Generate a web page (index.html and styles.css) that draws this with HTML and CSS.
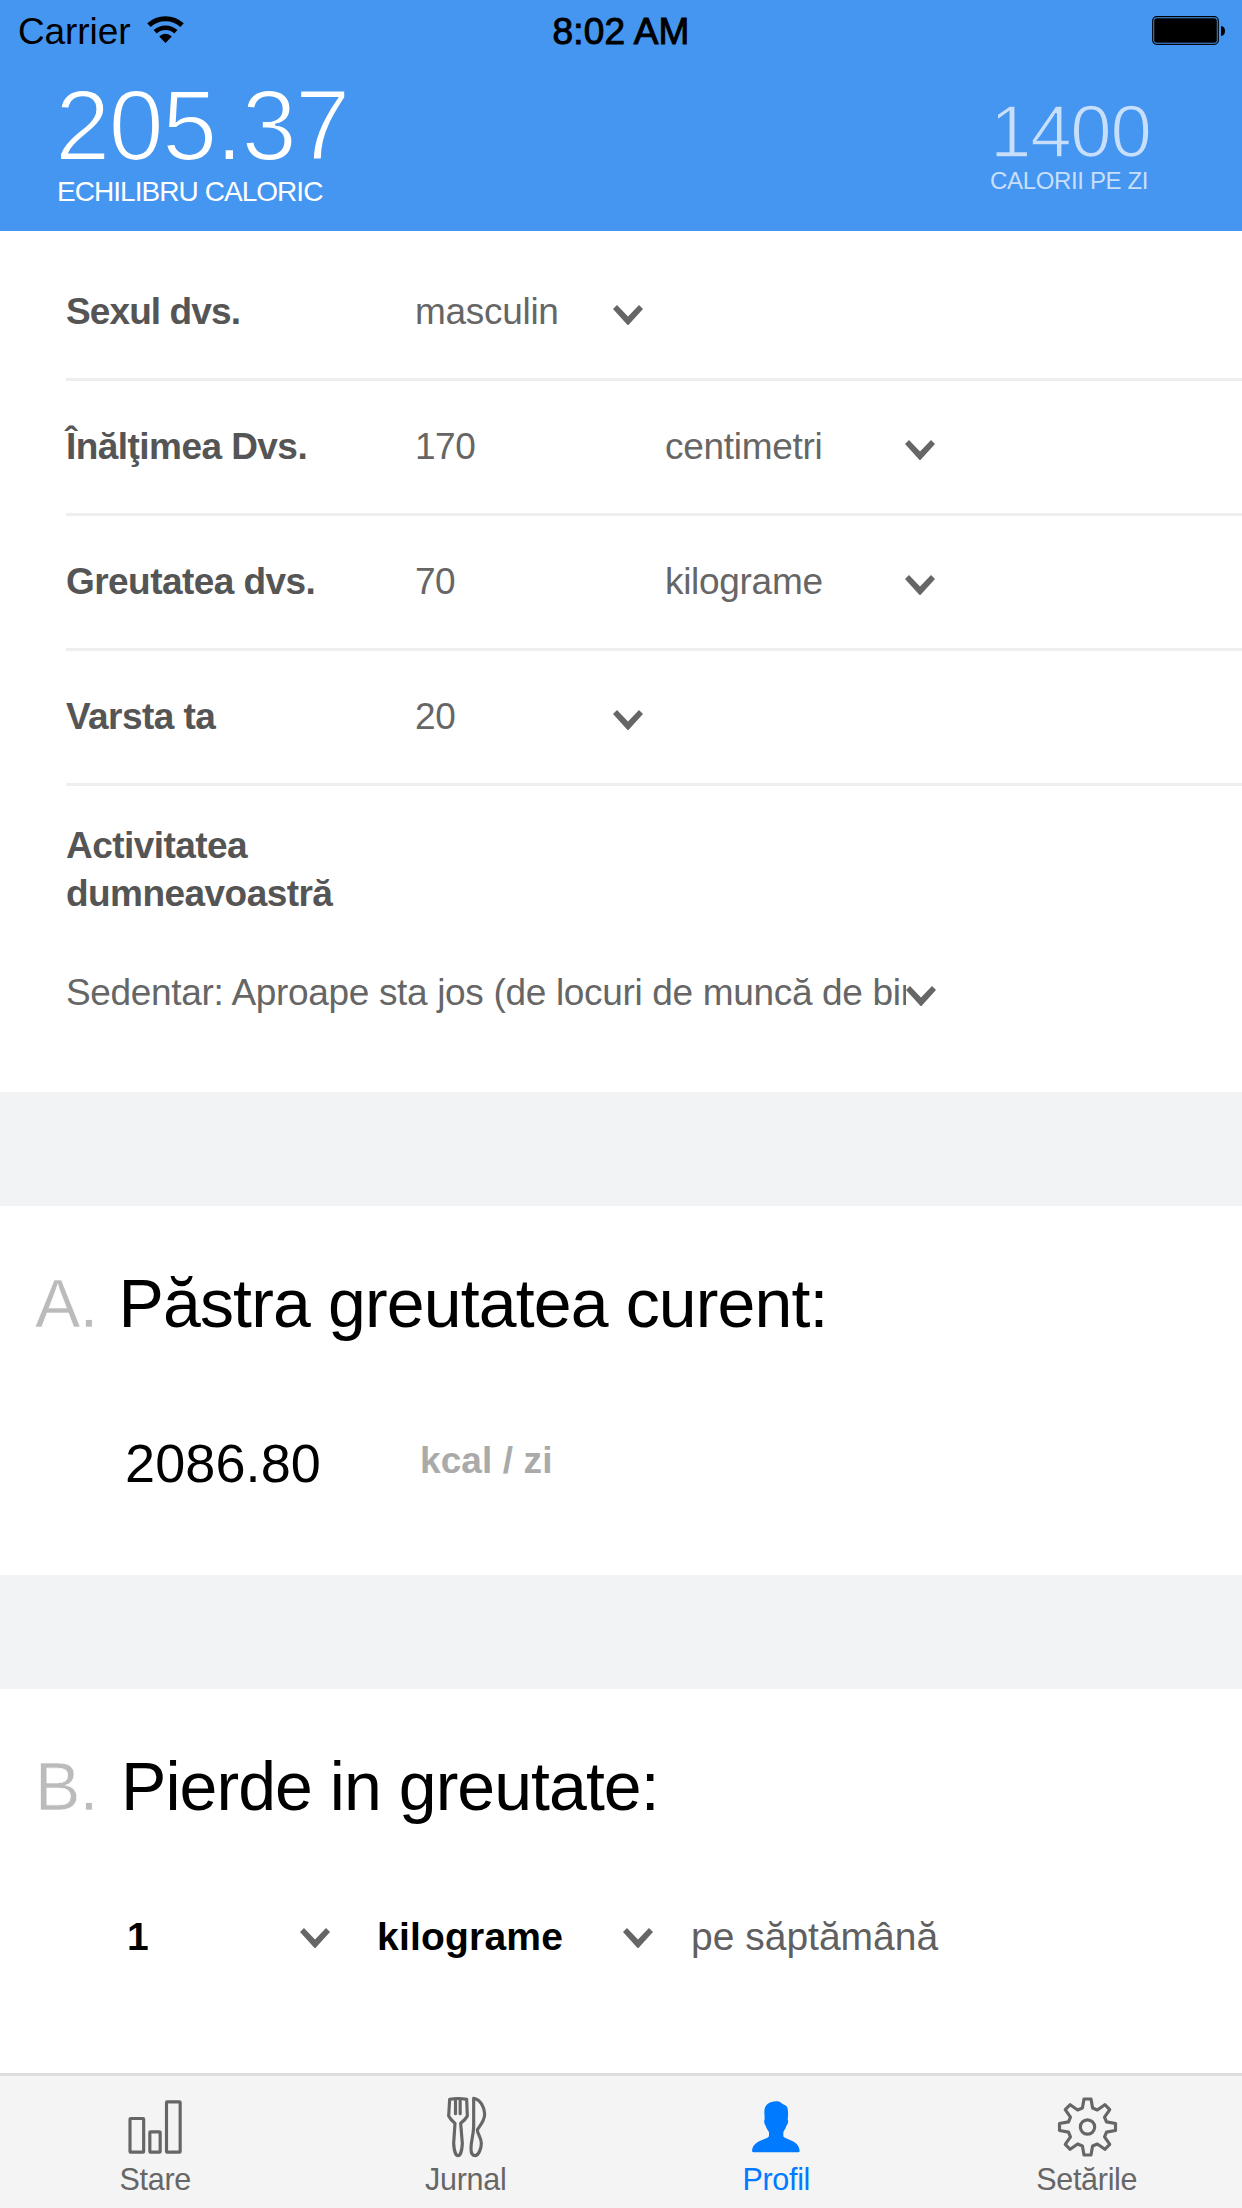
FILE: index.html
```html
<!DOCTYPE html>
<html lang="ro">
<head>
<meta charset="utf-8">
<title>Profil</title>
<link rel="stylesheet" href="styles.css">
</head>
<body>
<svg class="defs" aria-hidden="true">
  <symbol id="chevron" viewBox="0 0 30 20.5"><path d="M4 0 15 11.600 26 0 30 4 15 20.500 0 4Z"/></symbol>
</svg>
<div class="screen">
  <header class="header">
    <div class="status">
      <div class="status-left">
        <span>Carrier</span>
        <svg class="wifi" viewBox="0 0 37 28" fill="none" stroke="#000"><path stroke-width="5" d="M1.9 9.2A24.3 24.3 0 0 1 35.1 9.2"/><path stroke-width="4.6" d="M8.1 15.8A15.3 15.3 0 0 1 28.9 15.8"/><path fill="#000" stroke="none" d="M12.2 20.4A9 9 0 0 1 24.8 20.4L18.5 27Z"/></svg>
      </div>
      <span class="clock">8:02 AM</span>
      <div class="status-right">
        <svg class="battery" viewBox="0 0 74 30"><rect x=".7" y=".7" width="65.6" height="27.6" rx="4" fill="none" stroke="#000" stroke-width="1.2"/><rect x="2.200" y="2.200" width="62.600" height="24.600" rx="2.5"/><path d="M69 10Q73 10.500 73 15T69 20Z"/></svg>
      </div>
    </div>
    <div class="summary">
      <div class="balance">
        <div class="balance-value">205.37</div>
        <div class="balance-caption">ECHILIBRU CALORIC</div>
      </div>
      <div class="goal">
        <div class="goal-value">1400</div>
        <div class="goal-caption">CALORII PE ZI</div>
      </div>
    </div>
  </header>

  <main class="content">
    <section class="form">
      <div class="row first">
        <label class="label tight">Sexul dvs.</label>
        <div class="select single"><span>masculin</span><svg class="chevron"><use href="#chevron"/></svg></div>
      </div>
      <div class="row">
        <label class="label">Înălţimea Dvs.</label>
        <span class="value">170</span>
        <div class="select unit"><span>centimetri</span><svg class="chevron"><use href="#chevron"/></svg></div>
      </div>
      <div class="row">
        <label class="label">Greutatea dvs.</label>
        <span class="value">70</span>
        <div class="select unit"><span>kilograme</span><svg class="chevron"><use href="#chevron"/></svg></div>
      </div>
      <div class="row">
        <label class="label">Varsta ta</label>
        <div class="select single"><span>20</span><svg class="chevron"><use href="#chevron"/></svg></div>
      </div>
      <div class="activity">
        <label class="label">Activitatea dumneavoastră</label>
        <div class="activity-select"><span class="activity-text">Sedentar: Aproape sta jos (de locuri de muncă de birou)</span><svg class="chevron"><use href="#chevron"/></svg></div>
      </div>
    </section>

    <section class="plan plan-a">
      <h2 class="title"><span class="letter">A.</span><span>Păstra greutatea curent:</span></h2>
      <div class="result"><span class="kcal">2086.80</span><span class="kcal-unit">kcal / zi</span></div>
    </section>

    <section class="plan plan-b">
      <h2 class="title"><span class="letter">B.</span><span>Pierde in greutate:</span></h2>
      <div class="rate">
        <div class="select amount"><b>1</b><svg class="chevron"><use href="#chevron"/></svg></div>
        <div class="select mass"><b>kilograme</b><svg class="chevron"><use href="#chevron"/></svg></div>
        <span class="period">pe săptămână</span>
      </div>
    </section>
  </main>

  <nav class="tabs">
    <a class="tab">
      <svg class="icon" viewBox="133 108 186 186"><g class="line"><rect x="151" y="175.500" width="41" height="101" rx="2"/><rect x="210.500" y="215.500" width="31" height="61" rx="2"/><rect x="260.500" y="125.500" width="41" height="151" rx="2"/></g></svg>
      <span>Stare</span>
    </a>
    <a class="tab">
      <svg class="icon" viewBox="134 108 186 186"><g class="line"><path d="M178 118Q203 113 229 118L231 168Q226 178 211 190L216 250C215 270 210 287 203 287S191 270 190 250L194 190Q180 178 175 168Z"/><path d="M195.500 117V161M209.500 117V161"/><path d="M250 115V200C249 230 242 240 242 266C242 282 247 287 255 287C265 285 273 266 273 250C273 232 261 222 261 209C270 196 283 182 283 162C283 142 270 118 250 115Z"/></g></svg>
      <span>Jurnal</span>
    </a>
    <a class="tab active">
      <svg class="icon" viewBox="136 108 186 186"><path fill="currentColor" d="M229 124C210 124 194 134 194 155L195 178C192 182 194 194 198 197C200 205 206 212 208 217L208 229C203 240 160 240 157 272Q157 277 163 277H295Q300 277 300 272C297 240 257 240 251 229V217C253 211 259 204 260 197C265 194 267 182 264 178C266 165 266 150 262 140C257 135 250 134 245 129C240 125 235 124 229 124Z"/></svg>
      <span>Profil</span>
    </a>
    <a class="tab">
      <svg class="icon" viewBox="-94.500 -93 186 186"><g class="line"><path d="M-15.300-57-10.500-84H10.500L15.300-57 29.500-51.100 52-66.800 66.800-52 51.100-29.500 57-15.300 84-10.500V10.500L57 15.300 51.100 29.500 66.800 52 52 66.800 29.500 51.100 15.300 57 10.500 84H-10.500L-15.300 57-29.500 51.100-52 66.800-66.800 52-51.100 29.500-57 15.300-84 10.500V-10.500L-57-15.300-51.100-29.500-66.800-52-52-66.800-29.500-51.100Z"/><circle r="21.500"/></g></svg>
      <span>Setările</span>
    </a>
  </nav>
</div>
</body>
</html>
```
FILE: styles.css
```css
* { box-sizing: border-box; }
body {
  margin: 0;
  background: #fff;
  font-family: "Liberation Sans", Arial, sans-serif;
  font-size: 37px;
  color: #666;
}
.defs { display: none; }
.screen {
  display: flex;
  flex-direction: column;
  width: 1242px;
  height: 2208px;
  overflow: hidden;
}

/* header */
.header { flex: none; height: 231px; background: #4596f1; color: #fff; }
.status {
  display: grid;
  grid-template-columns: 1fr auto 1fr;
  height: 62px;
  line-height: 64px;
  color: #000;
}
.status-left { display: flex; padding-left: 18px; letter-spacing: -.1px; }
.wifi { width: 37px; height: 28px; margin: 16px 0 0 17px; }
.clock { -webkit-text-stroke: 1px #000; letter-spacing: .2px; }
.status-right { display: flex; justify-content: flex-end; padding: 16px 16px 0 0; }
.battery { width: 74px; height: 30px; }
.summary { display: flex; justify-content: space-between; padding: 14px 0 0 55px; }
.balance-value {
  font-size: 99.5px;
  line-height: 100px;
  letter-spacing: -1.8px;
  -webkit-text-stroke: 2.2px #4596f1;
}
.balance-caption { padding-left: 2px; font-size: 28px; line-height: 32px; letter-spacing: -.95px; }
.goal { width: 254px; padding-top: 18px; color: #c8dffb; }
.goal-value {
  padding-left: 2px;
  font-size: 74.5px;
  line-height: 75px;
  letter-spacing: -1.3px;
  -webkit-text-stroke: 1.7px #4596f1;
}
.goal-caption { margin-top: -1px; padding-left: 2px; font-size: 24px; line-height: 26px; letter-spacing: -.35px; }

/* body */
.content { flex: 1; min-height: 0; overflow: hidden; }
.chevron { flex: none; width: 30px; height: 20.5px; margin-top: 6px; fill: #666; }
.select { display: flex; align-items: center; justify-content: space-between; letter-spacing: -.3px; }
.form { height: 861px; }
.row {
  display: flex;
  align-items: center;
  height: 135px;
  margin-left: 66px;
  border-bottom: 3px solid #eee;
}
.row.first { height: 150px; padding-top: 15px; }
.label {
  display: block;
  width: 349px;
  font-weight: bold;
  line-height: 48px;
  letter-spacing: -.55px;
  color: #555;
}
.label.tight { letter-spacing: -.9px; }
.single { width: 228px; }
.value { width: 250px; letter-spacing: -.5px; }
.unit { width: 270px; }
.activity { padding: 36px 0 0 66px; }
.activity-select { display: flex; align-items: center; margin-top: 51px; line-height: 48px; }
.activity-text {
  width: 840px;
  overflow: hidden;
  white-space: nowrap;
  letter-spacing: -.33px;
}

/* plans */
.plan { border-top: 114px solid #f2f3f5; }
.plan-a { height: 483px; }
.title {
  display: flex;
  margin: 0;
  padding: 57px 0 0 35px;
  font-size: 68px;
  font-weight: normal;
  line-height: 80px;
  letter-spacing: -.85px;
  color: #000;
}
.letter { width: 83.5px; color: #bbb; -webkit-text-stroke: .6px #fff; }
.plan-b .title { letter-spacing: -.95px; }
.plan-b .letter { width: 86px; }
.result { display: flex; align-items: flex-start; margin-top: 88px; padding-left: 125px; line-height: 60px; }
.kcal { width: 295px; margin-top: 2px; font-size: 54px; letter-spacing: .1px; color: #000; }
.kcal-unit { font-weight: bold; letter-spacing: .1px; color: #aaa; }
.rate { display: flex; margin-top: 81px; padding-left: 127px; font-size: 39px; line-height: 60px; }
.rate .select { letter-spacing: .2px; }
.rate b { color: #000; }
.rate .chevron { margin-top: 2px; }
.amount { width: 203px; margin-right: 47px; }
.mass { width: 276px; margin-right: 38px; }
.period { color: #606060; }

/* tab bar */
.tabs { flex: none; display: flex; height: 135px; border-top: 3px solid #ddd; background: #f4f4f4; }
.tab {
  flex: 1;
  display: flex;
  flex-direction: column;
  align-items: center;
  padding-top: 20px;
  font-size: 30.5px;
  line-height: 36px;
  letter-spacing: -.3px;
}
.tab.active { color: #007aff; }
.icon { width: 62px; height: 62px; margin-bottom: 3px; }
.line { fill: none; stroke: #666; stroke-width: 9.5; stroke-linejoin: round; stroke-linecap: round; }
```
